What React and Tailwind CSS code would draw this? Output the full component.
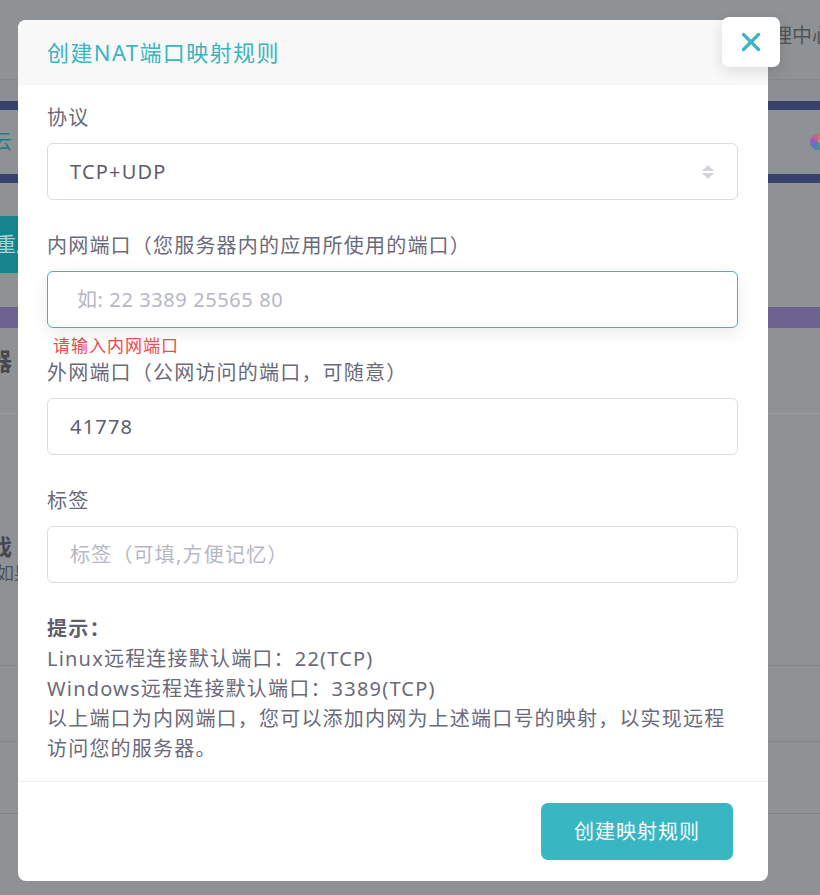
import { X } from "lucide-react";

const font = { fontFamily: '"Noto Sans", "Noto Sans CJK SC", sans-serif' };

// background page, already dimmed by the overlay colour
const BackgroundPage = () => {
  return (
    <div className="flex flex-col w-full h-full bg-[#8f9295]">
      <div className="h-[80px] flex justify-end items-center pr-0 border-b border-[#85888c]">
        <span className="text-[20px] text-[#4f5257] mr-[-12px] mt-[-8px] whitespace-nowrap">管理中心</span>
      </div>
      <div className="h-[21px] bg-[#8b8e92]"></div>
      <div className="h-[9px] bg-[#36426c]"></div>
      <div className="h-[64px] bg-[#8e9196] flex items-center justify-between">
        <span className="text-[20px] text-[#1f7d88] ml-[-8px]">云</span>
        <span className="w-[16px] h-[16px] rounded-full bg-[conic-gradient(#d06a6a,#c9a74a,#5aa15a,#4a7ac9,#9a5ac9,#d06a6a)] mr-[-6px]"></span>
      </div>
      <div className="h-[9px] bg-[#36426c]"></div>
      <div className="h-[33px]"></div>
      <div className="h-[57px] w-[120px] bg-[#17838d] flex items-center">
        <span className="text-[20px] text-[#a9d6da] ml-[-4px]">重启</span>
      </div>
      <div className="h-[34px]"></div>
      <div className="h-[21px] bg-[#6d6290]"></div>
      <div className="h-[86px] border-b border-[#999ca0] flex items-center">
        <span className="text-[24px] font-bold text-[#45484e] ml-[-60px] mt-[-20px]">服务器</span>
      </div>
      <div className="h-[118px]"></div>
      <div className="flex flex-col">
        <span className="text-[22px] font-bold text-[#45484e] ml-[-32px] leading-[28px]">游戏</span>
        <span className="text-[18px] text-[#4f5257] ml-[-4px] leading-[26px]">如果</span>
      </div>
      <div className="h-[80px] border-b border-[#84878b]"></div>
      <div className="h-[76px] border-b border-[#84878b]"></div>
      <div className="h-[72px] border-b border-[#7f8286]"></div>
    </div>
  );
};

const Label = ({ children }) => (
  <div className="text-[20px] leading-[30px] text-[#6a6a7a] mb-[10px]">{children}</div>
);

const App = () => {
  return (
    <div className="relative w-[820px] h-[895px] overflow-hidden" style={font}>
      <BackgroundPage />

      {/* modal overlay */}
      <div className="absolute inset-0 pt-[20px] pl-[18px]">
        <div className="relative w-[750px] h-[861px] bg-white rounded-[8px] flex flex-col tracking-[1.2px]">
          <div className="h-[65px] bg-[#f8f8f8] rounded-t-[8px] flex items-center pl-[29px]">
            <h2 className="text-[22px] text-[#3ab5c1] tracking-[1.4px]">创建NAT端口映射规则</h2>
          </div>

          <button className="absolute right-[-12px] top-[-3px] w-[58px] h-[50px] bg-white rounded-[7px] flex items-center justify-center shadow-[0_4px_14px_rgba(0,0,0,0.12)]">
            <X size={30} strokeWidth={2.6} className="text-[#3ab5c1]" />
          </button>

          <div className="flex-1 px-[29px] pr-[30px] pt-[18px]">
            <Label>协议</Label>
            <div className="h-[57px] border border-[#dcdce6] rounded-[6px] flex items-center justify-between pl-[22px] pr-[22px]">
              <span className="text-[20px] text-[#5c5c6e]">TCP+UDP</span>
              <svg width="14" height="16" viewBox="0 0 14 16">
                <path d="M7 1 L13 7 L1 7 Z" fill="#d4d4de" />
                <path d="M1 9 L13 9 L7 15 Z" fill="#d4d4de" />
              </svg>
            </div>

            <div className="mt-[31px]">
              <Label>内网端口（您服务器内的应用所使用的端口）</Label>
              <div className="h-[57px] border border-[#3ab5c1] rounded-[6px] flex items-center pl-[29px] shadow-[0_6px_16px_rgba(0,0,0,0.08)]">
                <span className="text-[20px] text-[#b7b7c4] tracking-[0.6px]">如: 22 3389 25565 80</span>
              </div>
              <div className="h-[30px] flex items-center pt-[5px] pl-[6px] text-[17px] tracking-[1px] text-[#f04848]">
                请输入内网端口
              </div>
            </div>

            <div>
              <Label>外网端口（公网访问的端口，可随意）</Label>
              <div className="h-[57px] border border-[#dcdce6] rounded-[6px] flex items-center pl-[22px]">
                <span className="text-[20px] text-[#5c5c6e]">41778</span>
              </div>
            </div>

            <div className="mt-[31px]">
              <Label>标签</Label>
              <div className="h-[57px] border border-[#dcdce6] rounded-[6px] flex items-center pl-[22px]">
                <span className="text-[20px] text-[#b7b7c4]">标签（可填,方便记忆）</span>
              </div>
            </div>

            <div className="mt-[31px] text-[20px] leading-[30px] text-[#6a6a7a]">
              <p className="font-bold text-[#5e5e6e]">提示：</p>
              <p>Linux远程连接默认端口：22(TCP)</p>
              <p>Windows远程连接默认端口：3389(TCP)</p>
              <p>以上端口为内网端口，您可以添加内网为上述端口号的映射，以实现远程访问您的服务器。</p>
            </div>
          </div>

          <div className="border-t border-[#efeff2] h-[100px] flex items-center justify-end pr-[35px]">
            <button className="w-[192px] h-[57px] bg-[#38b6c2] rounded-[7px] text-white text-[20px] tracking-[1px]">
              创建映射规则
            </button>
          </div>
        </div>
      </div>
    </div>
  );
};

export default App;
